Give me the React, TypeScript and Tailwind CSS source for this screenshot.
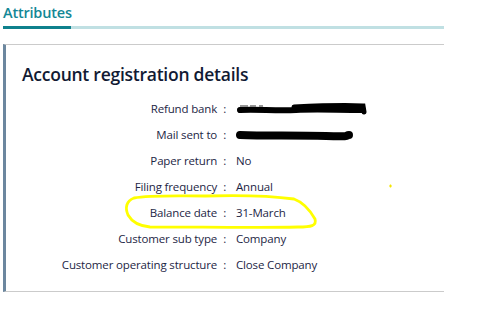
import React from 'react';

const rows: { label: string; value: React.ReactNode }[] = [
  { label: 'Refund bank', value: <Redacted width={131} kind="bank" /> },
  { label: 'Mail sent to', value: <Redacted width={117} kind="mail" /> },
  { label: 'Paper return', value: 'No' },
  { label: 'Filing frequency', value: 'Annual' },
  { label: 'Balance date', value: '31-March' },
  { label: 'Customer sub type', value: 'Company' },
  { label: 'Customer operating structure', value: 'Close Company' },
];

function Redacted({ width, kind }: { width: number; kind: 'bank' | 'mail' }) {
  // marker scribble over the sensitive value
  return (
    <svg width={width} height={12} viewBox={`0 0 ${width} 12`} className="block">
      {kind === 'bank' ? (
        <>
          <path d="M4 7 C20 6 40 8 60 7 S100 7 127 7" stroke="#000" strokeWidth="6" strokeLinecap="round" fill="none" />
          <path d="M58 4 C80 3 110 2 127 3 L128 9" stroke="#000" strokeWidth="5" strokeLinecap="round" fill="none" />
          <path d="M4 3 h8 M14 3 h6 M23 3 h4" stroke="#777" strokeWidth="1.5" />
        </>
      ) : (
        <>
          <path d="M4 6 C30 7 60 6 90 7 S108 6 113 6" stroke="#000" strokeWidth="8" strokeLinecap="round" fill="none" />
          <path d="M2 3 v6" stroke="#000" strokeWidth="2" />
        </>
      )}
    </svg>
  );
}

export default function App() {
  return (
    <div className="relative w-[478px] h-[313px] bg-white pl-[3px] pt-[3px] font-['Open_Sans',sans-serif]">
      {/* Tab header */}
      <div className="w-[441px]">
        <div className="text-[14.5px] font-semibold leading-[20px] text-[#138796] tracking-[-0.2px]">Attributes</div>
        <div className="mt-[3px] flex h-[3px]">
          <div className="w-[68px] bg-[#0f818d]" />
          <div className="flex-1 bg-[#c0e0e3]" />
        </div>
      </div>

      {/* Card */}
      <div className="mt-[15px] w-[441px] h-[248px] border-l-[3px] border-l-[#6c879f] border-t border-b border-t-[#cbcbcb] border-b-[#cbcbcb] pl-[16px] pt-[17px]">
        <h2 className="text-[17.5px] font-semibold leading-[24px] text-[#111a33] tracking-[-0.25px]">
          Account registration details
        </h2>
        <div className="mt-[10px] grid grid-cols-[204px_1fr] gap-x-[10px] text-[11.5px] text-[#1d2645] tracking-[-0.15px]">
          {rows.map((r) => (
            <React.Fragment key={r.label}>
              <div className="h-[26px] flex items-center justify-end whitespace-nowrap">
                {r.label}
                <span className="ml-[6px]">:</span>
              </div>
              <div className="h-[26px] flex items-center whitespace-nowrap">{r.value}</div>
            </React.Fragment>
          ))}
        </div>
      </div>

      {/* Yellow highlighter annotation */}
      <svg className="absolute left-0 top-0 pointer-events-none" width="478" height="313" viewBox="0 0 478 313">
        <path
          d="M134 198 C150 195 175 196 205 196 C240 195 272 196 294 199 C305 203 311 212 315 219 C317 226 311 227 298 227 C260 228 200 227 150 227 C139 226 132 222 128 215 C125 208 126 201 134 198 Z"
          fill="none"
          stroke="#ffff00"
          strokeWidth="2.8"
          strokeLinejoin="round"
        />
        <path d="M389 186 h3 M390.5 184.5 v3" stroke="#f4e600" strokeWidth="1.2" />
      </svg>
    </div>
  );
}
